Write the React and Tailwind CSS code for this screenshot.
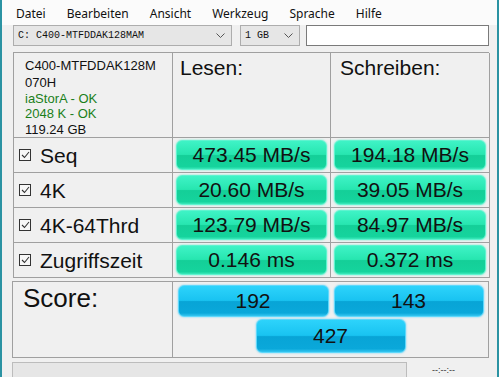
import React from "react";

// --- small drawings ---
const Chevron = () => (
  <svg width="9" height="6" viewBox="0 0 9 6" fill="none" stroke="#555" strokeWidth="1">
    <path d="M0.5 0.5l4 4 4-4" />
  </svg>
);

const CheckBox = () => (
  <span className="inline-flex h-[12px] w-[12px] items-center justify-center border border-[#333] bg-[#f7f7f7]">
    <svg width="9" height="8" viewBox="0 0 9 8" fill="none" stroke="#333" strokeWidth="1.1">
      <path d="M1 4l2.5 2.5L8 1" />
    </svg>
  </span>
);

const menu = ["Datei", "Bearbeiten", "Ansicht", "Werkzeug", "Sprache", "Hilfe"];

const rows = [
  { label: "Seq", read: "473.45 MB/s", write: "194.18 MB/s" },
  { label: "4K", read: "20.60 MB/s", write: "39.05 MB/s" },
  { label: "4K-64Thrd", read: "123.79 MB/s", write: "84.97 MB/s" },
  { label: "Zugriffszeit", read: "0.146 ms", write: "0.372 ms" },
];

const greenBar =
  "flex h-full w-full items-center justify-center rounded-[6px] border border-[#5ff3cf] bg-[linear-gradient(to_bottom,#3ff3c6_0%,#27e6b0_48%,#14cf98_52%,#15d49d_92%,#3be9bb_100%)] shadow-[0_0_2px_#5eeccb]";
const blueBar =
  "flex items-center justify-center rounded-[6px] border border-[#5fd8fb] bg-[linear-gradient(to_bottom,#2dd3fb_0%,#19c3f1_48%,#08a4d6_52%,#0aa8da_90%,#35c6f1_100%)] shadow-[0_0_2px_#5fd0f5]";

export default function App() {
  return (
    <div className="h-[377px] w-[499px] overflow-hidden border-x-2 border-[#2b93a3] bg-[#f0f0f0] font-['Liberation_Sans',Arial,sans-serif] text-[#111]">
      {/* Menu */}
      <div className="flex h-[25px] items-center gap-[21px] bg-[#fbfbfb] pl-[14px] pt-[2px] font-['Noto_Sans',sans-serif] text-[12px] text-[#111]">
        {menu.map((m) => (
          <span key={m}>{m}</span>
        ))}
      </div>

      {/* Toolbar */}
      <div className="flex h-[21px] items-stretch pl-[11px]">
        <div className="flex w-[219px] items-center justify-between border border-[#adadad] bg-[#e6e6e6] pl-[4px] pr-[6px] font-['Liberation_Mono',monospace] text-[10px]">
          <span>C: C400-MTFDDAK128MAM</span>
          <Chevron />
        </div>
        <div className="ml-[8px] flex w-[60px] items-center justify-between border border-[#adadad] bg-[#e6e6e6] pl-[4px] pr-[6px] font-['Liberation_Mono',monospace] text-[10px]">
          <span>1 GB</span>
          <Chevron />
        </div>
        <div className="ml-[6px] w-[183px] border border-[#7a7a7a] bg-white" />
      </div>

      {/* Results grid */}
      <div className="ml-[11px] mt-[6px] grid w-[476px] grid-cols-[159px_158px_159px] border-l border-t border-[#a0a0a0]">
        <div className="h-[85px] border-b border-r border-[#a0a0a0] pl-[11px] pt-[5px] text-[13px] leading-[15.8px]">
          <div>C400-MTFDDAK128M</div>
          <div className="mt-[1px]">070H</div>
          <div className="text-[#1a7f1a]">iaStorA - OK</div>
          <div className="text-[#1a7f1a]">2048 K - OK</div>
          <div>119.24 GB</div>
        </div>
        <div className="h-[85px] border-b border-r border-[#a0a0a0] pl-[7px] text-[21px] leading-[30px]">Lesen:</div>
        <div className="h-[85px] border-b border-r border-[#a0a0a0] pl-[9px] text-[21px] leading-[30px]">Schreiben:</div>

        {rows.map((r) => (
          <React.Fragment key={r.label}>
            <div className="flex h-[35px] items-center gap-[9px] border-b border-r border-[#a0a0a0] pl-[5px] text-[21px]">
              <CheckBox />
              <span className="leading-none">{r.label}</span>
            </div>
            <div className="h-[35px] border-b border-r border-[#a0a0a0] px-[3px] py-[2px] text-[21px]">
              <div className={greenBar}>{r.read}</div>
            </div>
            <div className="h-[35px] border-b border-r border-[#a0a0a0] px-[3px] py-[2px] text-[21px]">
              <div className={greenBar}>{r.write}</div>
            </div>
          </React.Fragment>
        ))}
      </div>

      {/* Score */}
      <div className="ml-[10px] mt-[3px] flex h-[77px] w-[477px] border border-[#a0a0a0]">
        <div className="w-[160px] border-r border-[#a0a0a0] pl-[10px] pt-[1px] text-[26px] leading-[30px]">Score:</div>
        <div className="flex flex-1 flex-col items-center pt-[3px] text-[21px]">
          <div className="flex gap-[5px]">
            <div className={`${blueBar} h-[32px] w-[151px]`}>192</div>
            <div className={`${blueBar} h-[32px] w-[150px]`}>143</div>
          </div>
          <div className={`${blueBar} mt-[2px] h-[34px] w-[150px]`}>427</div>
        </div>
      </div>

      {/* Status */}
      <div className="ml-[10px] mt-[4px] flex items-start">
        <div className="h-[18px] w-[395px] border border-[#bcbcbc] bg-[#e6e6e6]" />
        <span className="ml-[25px] mt-[2px] text-[9px] text-[#333]">--:--:--</span>
      </div>
    </div>
  );
}
